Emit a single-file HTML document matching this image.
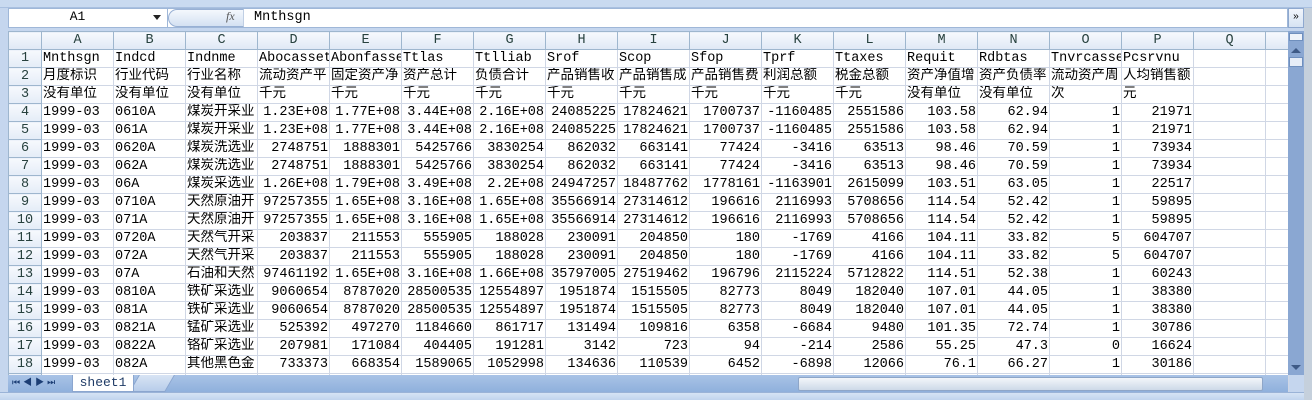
<!DOCTYPE html>
<html><head><meta charset="utf-8">
<style>
*{margin:0;padding:0;box-sizing:border-box}
body{width:1312px;height:400px;overflow:hidden;background:#c5d6ee;position:relative;font-family:"Liberation Mono","Noto Sans CJK SC",monospace;font-size:12px;color:#000}
.top{position:absolute;left:0;top:0;width:1312px;height:8px;background:#c9daf0;border-bottom:1px solid #a9c0e0}
.fbar{position:absolute;left:8px;top:8px;width:1280px;height:20px;background:#fff;border:1px solid #9fb7d8}
.nbox{position:absolute;left:8px;top:8px;width:160px;height:20px;border-right:1px solid #9fb7d8;text-align:center;line-height:18px;padding-right:20px;font-size:13px}
.arr{position:absolute;left:153px;top:15px;width:0;height:0;border-left:4px solid transparent;border-right:4px solid transparent;border-top:5px solid #222}
.pill{position:absolute;left:168px;top:9px;width:76px;height:18px;border-radius:9px 0 0 9px;background:linear-gradient(#f4f8fd,#d4e1f2);border:1px solid #98b0d4;border-right:1px solid #c0cfe4}
.fx{position:absolute;left:226px;top:9px;font-family:"Liberation Serif",serif;font-style:italic;font-size:12px;color:#555}
.ftxt{position:absolute;left:254px;top:9px;line-height:18px;font-size:13.5px}
.exp{position:absolute;left:1288px;top:8px;width:16px;height:20px;background:linear-gradient(#f2f6fc,#d6e3f3);border:1px solid #8ea8cf;font-size:10px;text-align:center;line-height:18px}
table{position:absolute;left:8px;top:31px;width:1280px;border-collapse:collapse;table-layout:fixed;background:#fff}
td{height:18px;border:1px solid #d0d7e5;white-space:nowrap;overflow:hidden;padding:0 1px;line-height:17px;font-size:13.5px}
tr.h td{background:linear-gradient(#f6f9fd,#dfe8f5);border-color:#9eb6ce;text-align:center;color:#27413e;height:18px}
td.rh{background:linear-gradient(#f6f9fd,#e4ecf7);border-color:#9eb6ce;text-align:center;color:#27413e}
td.r{text-align:right}
.vs{position:absolute;left:1288px;top:31px;width:16px;height:344px;background:#8aa7d2}
.vs .t{position:absolute;left:1px;top:2px;width:14px;height:8px;background:#eef3fa;border:1px solid #6f8fbd}
.vs .u{position:absolute;left:3px;top:17px;border-left:5px solid transparent;border-right:5px solid transparent;border-bottom:5px solid #3e5a86}
.vs .th{position:absolute;left:1px;top:26px;width:14px;height:10px;background:#e6edf7;border:1px solid #6f8fbd}
.vs .d{position:absolute;left:3px;top:334px;border-left:5px solid transparent;border-right:5px solid transparent;border-top:5px solid #3e5a86}
.rb{position:absolute;left:1304px;top:8px;width:8px;height:392px;background:#c5d0dc}
.tabs{position:absolute;left:8px;top:375px;width:1280px;height:17px;background:linear-gradient(#a9c3e6,#8fb0dc)}
.nav{position:absolute;left:8px;top:375px;width:62px;height:17px;font-size:9px;color:#1c3e75;line-height:17px;padding-left:4px;letter-spacing:3px}
.sheet{position:absolute;left:72px;top:375px;width:62px;height:17px;background:#fff;border:1px solid #8ba6cf;border-top:none;text-align:center;line-height:16px;color:#1f3b66;font-size:13px}
.new{position:absolute;left:134px;top:375px;width:36px;height:17px;background:linear-gradient(#d8e4f4,#b8cdea);transform:skewX(-30deg);border:1px solid #8ba6cf;border-top:none}
.hs{position:absolute;left:780px;top:377px;width:508px;height:14px}
.hs .th{position:absolute;left:18px;top:0;width:465px;height:14px;background:linear-gradient(#f3f6fa,#cdd9e8);border:1px solid #8ea6c8;border-radius:2px}
.status{position:absolute;left:0;top:392px;width:1304px;height:8px;background:linear-gradient(#d5e3f5,#c0d4ee);border-top:1px solid #9ab3d7}
</style></head><body>
<div class="top"></div>
<div class="fbar"></div>
<div class="nbox">A1</div><div class="arr"></div>
<div class="pill"></div><div class="fx">fx</div>
<div class="ftxt">Mnthsgn</div>
<div class="exp">»</div>
<table>
<colgroup><col style="width:33px"><col style="width:72px"><col style="width:72px"><col style="width:72px"><col style="width:72px"><col style="width:72px"><col style="width:72px"><col style="width:72px"><col style="width:72px"><col style="width:72px"><col style="width:72px"><col style="width:72px"><col style="width:72px"><col style="width:72px"><col style="width:72px"><col style="width:72px"><col style="width:72px"><col style="width:72px"><col style="width:23px"></colgroup>
<tr class="h"><td></td><td>A</td><td>B</td><td>C</td><td>D</td><td>E</td><td>F</td><td>G</td><td>H</td><td>I</td><td>J</td><td>K</td><td>L</td><td>M</td><td>N</td><td>O</td><td>P</td><td>Q</td><td></td></tr>
<tr><td class="rh">1</td><td>Mnthsgn</td><td>Indcd</td><td>Indnme</td><td>Abocasset</td><td>Abonfasse</td><td>Ttlas</td><td>Ttlliab</td><td>Srof</td><td>Scop</td><td>Sfop</td><td>Tprf</td><td>Ttaxes</td><td>Requit</td><td>Rdbtas</td><td>Tnvrcasse</td><td>Pcsrvnu</td><td></td><td></td></tr>
<tr><td class="rh">2</td><td>月度标识</td><td>行业代码</td><td>行业名称</td><td>流动资产平</td><td>固定资产净</td><td>资产总计</td><td>负债合计</td><td>产品销售收</td><td>产品销售成</td><td>产品销售费</td><td>利润总额</td><td>税金总额</td><td>资产净值增</td><td>资产负债率</td><td>流动资产周</td><td>人均销售额</td><td></td><td></td></tr>
<tr><td class="rh">3</td><td>没有单位</td><td>没有单位</td><td>没有单位</td><td>千元</td><td>千元</td><td>千元</td><td>千元</td><td>千元</td><td>千元</td><td>千元</td><td>千元</td><td>千元</td><td>没有单位</td><td>没有单位</td><td>次</td><td>元</td><td></td><td></td></tr>
<tr><td class="rh">4</td><td>1999-03</td><td>0610A</td><td>煤炭开采业</td><td class="r">1.23E+08</td><td class="r">1.77E+08</td><td class="r">3.44E+08</td><td class="r">2.16E+08</td><td class="r">24085225</td><td class="r">17824621</td><td class="r">1700737</td><td class="r">-1160485</td><td class="r">2551586</td><td class="r">103.58</td><td class="r">62.94</td><td class="r">1</td><td class="r">21971</td><td></td><td></td></tr>
<tr><td class="rh">5</td><td>1999-03</td><td>061A</td><td>煤炭开采业</td><td class="r">1.23E+08</td><td class="r">1.77E+08</td><td class="r">3.44E+08</td><td class="r">2.16E+08</td><td class="r">24085225</td><td class="r">17824621</td><td class="r">1700737</td><td class="r">-1160485</td><td class="r">2551586</td><td class="r">103.58</td><td class="r">62.94</td><td class="r">1</td><td class="r">21971</td><td></td><td></td></tr>
<tr><td class="rh">6</td><td>1999-03</td><td>0620A</td><td>煤炭洗选业</td><td class="r">2748751</td><td class="r">1888301</td><td class="r">5425766</td><td class="r">3830254</td><td class="r">862032</td><td class="r">663141</td><td class="r">77424</td><td class="r">-3416</td><td class="r">63513</td><td class="r">98.46</td><td class="r">70.59</td><td class="r">1</td><td class="r">73934</td><td></td><td></td></tr>
<tr><td class="rh">7</td><td>1999-03</td><td>062A</td><td>煤炭洗选业</td><td class="r">2748751</td><td class="r">1888301</td><td class="r">5425766</td><td class="r">3830254</td><td class="r">862032</td><td class="r">663141</td><td class="r">77424</td><td class="r">-3416</td><td class="r">63513</td><td class="r">98.46</td><td class="r">70.59</td><td class="r">1</td><td class="r">73934</td><td></td><td></td></tr>
<tr><td class="rh">8</td><td>1999-03</td><td>06A</td><td>煤炭采选业</td><td class="r">1.26E+08</td><td class="r">1.79E+08</td><td class="r">3.49E+08</td><td class="r">2.2E+08</td><td class="r">24947257</td><td class="r">18487762</td><td class="r">1778161</td><td class="r">-1163901</td><td class="r">2615099</td><td class="r">103.51</td><td class="r">63.05</td><td class="r">1</td><td class="r">22517</td><td></td><td></td></tr>
<tr><td class="rh">9</td><td>1999-03</td><td>0710A</td><td>天然原油开</td><td class="r">97257355</td><td class="r">1.65E+08</td><td class="r">3.16E+08</td><td class="r">1.65E+08</td><td class="r">35566914</td><td class="r">27314612</td><td class="r">196616</td><td class="r">2116993</td><td class="r">5708656</td><td class="r">114.54</td><td class="r">52.42</td><td class="r">1</td><td class="r">59895</td><td></td><td></td></tr>
<tr><td class="rh">10</td><td>1999-03</td><td>071A</td><td>天然原油开</td><td class="r">97257355</td><td class="r">1.65E+08</td><td class="r">3.16E+08</td><td class="r">1.65E+08</td><td class="r">35566914</td><td class="r">27314612</td><td class="r">196616</td><td class="r">2116993</td><td class="r">5708656</td><td class="r">114.54</td><td class="r">52.42</td><td class="r">1</td><td class="r">59895</td><td></td><td></td></tr>
<tr><td class="rh">11</td><td>1999-03</td><td>0720A</td><td>天然气开采</td><td class="r">203837</td><td class="r">211553</td><td class="r">555905</td><td class="r">188028</td><td class="r">230091</td><td class="r">204850</td><td class="r">180</td><td class="r">-1769</td><td class="r">4166</td><td class="r">104.11</td><td class="r">33.82</td><td class="r">5</td><td class="r">604707</td><td></td><td></td></tr>
<tr><td class="rh">12</td><td>1999-03</td><td>072A</td><td>天然气开采</td><td class="r">203837</td><td class="r">211553</td><td class="r">555905</td><td class="r">188028</td><td class="r">230091</td><td class="r">204850</td><td class="r">180</td><td class="r">-1769</td><td class="r">4166</td><td class="r">104.11</td><td class="r">33.82</td><td class="r">5</td><td class="r">604707</td><td></td><td></td></tr>
<tr><td class="rh">13</td><td>1999-03</td><td>07A</td><td>石油和天然</td><td class="r">97461192</td><td class="r">1.65E+08</td><td class="r">3.16E+08</td><td class="r">1.66E+08</td><td class="r">35797005</td><td class="r">27519462</td><td class="r">196796</td><td class="r">2115224</td><td class="r">5712822</td><td class="r">114.51</td><td class="r">52.38</td><td class="r">1</td><td class="r">60243</td><td></td><td></td></tr>
<tr><td class="rh">14</td><td>1999-03</td><td>0810A</td><td>铁矿采选业</td><td class="r">9060654</td><td class="r">8787020</td><td class="r">28500535</td><td class="r">12554897</td><td class="r">1951874</td><td class="r">1515505</td><td class="r">82773</td><td class="r">8049</td><td class="r">182040</td><td class="r">107.01</td><td class="r">44.05</td><td class="r">1</td><td class="r">38380</td><td></td><td></td></tr>
<tr><td class="rh">15</td><td>1999-03</td><td>081A</td><td>铁矿采选业</td><td class="r">9060654</td><td class="r">8787020</td><td class="r">28500535</td><td class="r">12554897</td><td class="r">1951874</td><td class="r">1515505</td><td class="r">82773</td><td class="r">8049</td><td class="r">182040</td><td class="r">107.01</td><td class="r">44.05</td><td class="r">1</td><td class="r">38380</td><td></td><td></td></tr>
<tr><td class="rh">16</td><td>1999-03</td><td>0821A</td><td>锰矿采选业</td><td class="r">525392</td><td class="r">497270</td><td class="r">1184660</td><td class="r">861717</td><td class="r">131494</td><td class="r">109816</td><td class="r">6358</td><td class="r">-6684</td><td class="r">9480</td><td class="r">101.35</td><td class="r">72.74</td><td class="r">1</td><td class="r">30786</td><td></td><td></td></tr>
<tr><td class="rh">17</td><td>1999-03</td><td>0822A</td><td>铬矿采选业</td><td class="r">207981</td><td class="r">171084</td><td class="r">404405</td><td class="r">191281</td><td class="r">3142</td><td class="r">723</td><td class="r">94</td><td class="r">-214</td><td class="r">2586</td><td class="r">55.25</td><td class="r">47.3</td><td class="r">0</td><td class="r">16624</td><td></td><td></td></tr>
<tr><td class="rh">18</td><td>1999-03</td><td>082A</td><td>其他黑色金</td><td class="r">733373</td><td class="r">668354</td><td class="r">1589065</td><td class="r">1052998</td><td class="r">134636</td><td class="r">110539</td><td class="r">6452</td><td class="r">-6898</td><td class="r">12066</td><td class="r">76.1</td><td class="r">66.27</td><td class="r">1</td><td class="r">30186</td><td></td><td></td></tr>
<tr><td class="rh">19</td><td></td><td></td><td></td><td></td><td></td><td></td><td></td><td></td><td></td><td></td><td></td><td></td><td></td><td></td><td></td><td></td><td></td><td></td></tr>
</table>
<div class="vs"><div class="t"></div><div class="u"></div><div class="th"></div><div class="d"></div></div>
<div class="rb"></div>
<div class="tabs"></div>
<div class="nav">⏮◀▶⏭</div>
<div class="new"></div>
<div class="sheet">sheet1</div>
<div class="hs"><div class="th"></div></div>
<div class="status"></div>
</body></html>
